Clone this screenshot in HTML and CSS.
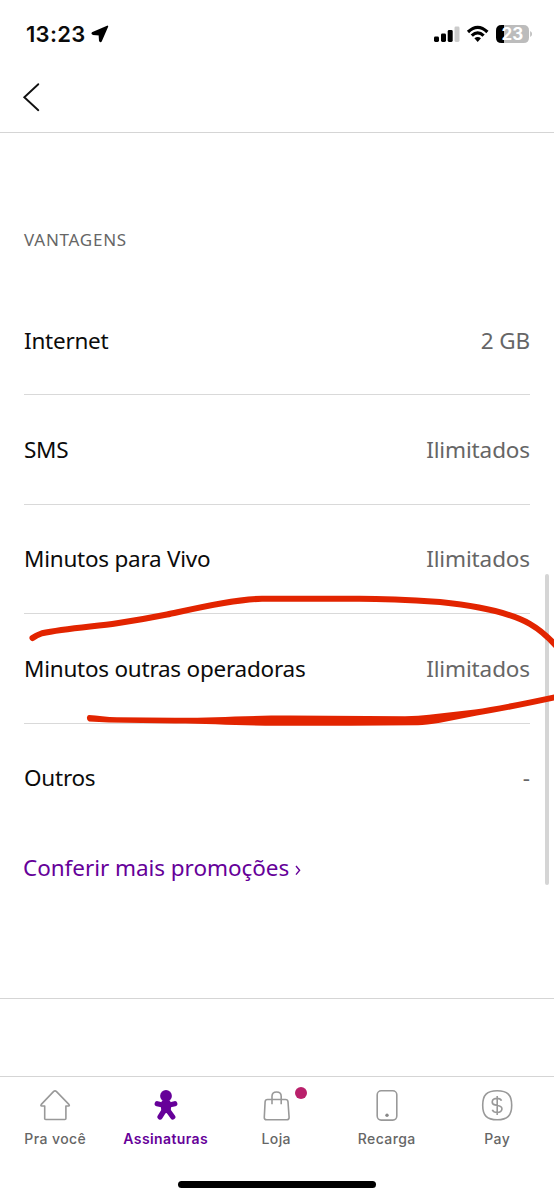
FILE: index.html
```html
<!DOCTYPE html>
<html lang="pt-BR">
<head>
<meta charset="utf-8">
<title>Vantagens</title>
<link rel="stylesheet" href="styles.css">
</head>
<body>
<div class="screen">
  <div class="status">
    <span class="time">13:23</span>
    <svg class="arrow" width="18" height="18" viewBox="0 0 18 18"><path d="M16.400 1.400 L10.200 15.800 Q9.300 17.300 8.800 15.600 L8.400 9.700 L2 9.100 Q.600 8.600 1.800 7.700 Z" stroke="#000" stroke-width="1.600" stroke-linejoin="round"/></svg>
    <svg class="indicators" width="100" height="22" viewBox="0 0 100 22">
      <rect x="2" y="13.500" width="5" height="5.500" rx="1.400"/>
      <rect x="9" y="10.500" width="5" height="8.500" rx="1.400"/>
      <rect x="15.700" y="7" width="5" height="12" rx="1.400"/>
      <rect x="22.500" y="3.500" width="5" height="15.500" rx="1.400" fill="#cbcbcb"/>
      <g fill="none" stroke="#000" stroke-width="3.200">
        <path d="M36 9 Q45.700 -.200 55.400 9"/>
        <path d="M39.800 12.700 Q45.700 7 51.600 12.700"/>
      </g>
      <path d="M42.400 15.300 Q45.700 12.600 49 15.300 L45.700 18.900Z"/>
      <path d="M69.500 2H74V20H69.500Q64 20 64 14.500V7.500Q64 2 69.500 2Z"/>
      <path d="M72 2H91.500Q97 2 97 7.500V14.500Q97 20 91.500 20H72Z" fill="#bcbcbc"/>
      <path d="M98.200 8Q100 9 100 11T98.200 14Z" fill="#bcbcbc"/>
      <text class="battery" x="80.400" y="17.300">23</text>
    </svg>
  </div>
  <header class="header">
    <svg width="18" height="30" viewBox="0 0 18 30"><path d="M16.300 2.200 L2.300 15.200 L16.300 28.200" fill="none" stroke="#111" stroke-width="1.900" stroke-linecap="round"/></svg>
  </header>
  <main class="content">
    <h1 class="title">VANTAGENS</h1>
    <div class="row"><span class="label">Internet</span><span class="value">2 GB</span></div>
    <div class="row"><span class="label">SMS</span><span class="value">Ilimitados</span></div>
    <div class="row"><span class="label">Minutos para Vivo</span><span class="value">Ilimitados</span></div>
    <div class="row"><span class="label">Minutos outras operadoras</span><span class="value">Ilimitados</span></div>
    <div class="row last"><span class="label">Outros</span><span class="value">-</span></div>
    <a class="link"><span>Conferir mais promoções</span><svg width="6" height="11" viewBox="0 0 6 11"><path d="M1 1 L4.600 5.300 L1 9.600" fill="none" stroke="#660099" stroke-width="1.400"/></svg></a>
  </main>
  <nav class="tabs">
    <div class="tab">
      <svg width="34" height="34" viewBox="0 0 34 34"><path d="M6.700 31V18H3.800Q2.200 17.700 3.300 16.400L15.700 3.400Q17 2.200 18.300 3.400L30.900 16.400Q32 17.700 30.400 18H27.900V30.500Q27.900 31.500 26.900 31.500H7.700Q6.700 31.500 6.700 30.500Z"/></svg>
      <span>Pra você</span>
    </div>
    <div class="tab active">
      <svg width="34" height="34" viewBox="0 0 34 34"><circle cx="17" cy="7.900" r="5.900"/><path class="limb" d="M8.200 15.700Q17 18.300 25.800 15.700M16 21L11 29M18 21L23.800 29"/><path d="M13 12.500H21L22.500 17 21.600 22.500 19.500 25.500Q17.300 24.500 14.800 25.500L12.400 22.500 11.500 17Z"/></svg>
      <span>Assinaturas</span>
    </div>
    <div class="tab">
      <svg width="34" height="34" viewBox="0 0 34 34"><path d="M8.500 11.500H26.500Q28.800 11.500 29 13.700L30.100 29.200Q30.200 31.800 27.700 31.800H7.700Q5.100 31.800 5.300 29.200L6.100 13.700Q6.300 11.500 8.500 11.500ZM13 16.300V8.200Q13.100 4 17.600 4T22.200 8.200V16.300"/></svg>
      <i class="badge"></i>
      <span>Loja</span>
    </div>
    <div class="tab">
      <svg width="34" height="34" viewBox="0 0 34 34"><rect x="7.200" y="2.800" width="19.600" height="29.300" rx="4"/><circle class="dot" cx="17" cy="27.300" r="1.700"/></svg>
      <span>Recarga</span>
    </div>
    <div class="tab">
      <svg width="34" height="34" viewBox="0 0 34 34"><path d="M17.200 2.800C27.500 2.800 31.700 7 31.700 17.300S27.500 31.800 17.200 31.800 2.700 27.600 2.700 17.300 6.900 2.800 17.200 2.800Z"/><path d="M21.500 12.700Q20.500 10.400 17.200 10.400C10.900 10.400 11.100 16 15 16.900L18.700 17.700C23.500 18.700 22.900 24.500 17.200 24.500Q13.400 24.500 12.300 21.700M17.200 7.900V27"/></svg>
      <span>Pay</span>
    </div>
  </nav>
  <div class="home"></div>
  <div class="scrollbar"></div>
  <svg class="marks" width="554" height="140" viewBox="0 590 554 140">
    <path d="M32.500 638Q36 635.500 42 633.300C65 628.500 95 626.500 117 623.300Q142 619.500 167 614.500C195 608.500 235 599 262 598.800H350C382 598.200 402 599.500 440 602C478 606 512 613.500 530 624Q544 632 558 648" fill="none" stroke="#e22400" stroke-width="6" stroke-linecap="round"/>
    <path d="M89 715C97 715.500 107 717.300 117 717.300L175 717.800C210 718 240 715.500 290 715.500L405 716.200Q419 716.200 429 714.800L475 709.500Q500 706 554 694.500V700.500Q515 709 477 715.500L440 722.800Q426 725 418 725.300L350 725.800H277C240 725.800 210 723.500 175 723.500L109 722.600 89 721.600Q86.500 720.500 87 717Q87.500 715 89 715Z" fill="#e22400"/>
  </svg>
</div>
</body>
</html>
```
FILE: styles.css
```css
body { margin: 0; background: #fff; }
.screen {
  position: relative;
  width: 554px;
  height: 1200px;
  overflow: hidden;
  display: flex;
  flex-direction: column;
  background: #fff;
  font-family: "Noto Sans", sans-serif;
  color: #0b0b0b;
}
.status {
  flex: none;
  height: 68px;
  box-sizing: border-box;
  padding: 0 22px 0 26px;
  display: flex;
  align-items: center;
  font-family: Inter, sans-serif;
}
.time { font-size: 22px; font-weight: 600; letter-spacing: .3px; width: 60px; white-space: nowrap; }
.arrow { margin-left: 5px; }
.indicators { margin-left: auto; }
.battery { font: 700 17px Inter, sans-serif; fill: #fff; text-anchor: middle; }
.header {
  flex: none;
  height: 65px;
  box-sizing: border-box;
  padding: 14px 22px 0;
  border-bottom: 1px solid #d5d5d5;
}
.header svg { display: block; }
.content {
  flex: none;
  height: 866px;
  box-sizing: border-box;
  padding: 94px 24px 0;
  border-bottom: 1px solid #d5d5d5;
}
.title {
  margin: 0;
  height: 59px;
  font-size: 17px;
  letter-spacing: .750px;
  line-height: 25px;
  font-weight: 400;
  color: #666;
}
.row {
  height: 109.400px;
  box-sizing: border-box;
  display: flex;
  justify-content: space-between;
  align-items: center;
  border-bottom: 1.500px solid #d9d9d9;
  font-size: 22.500px;
}
.row.last { border-color: transparent; }
.label { letter-spacing: -.240px; }
.value { color: #666; letter-spacing: -.120px; }
.link {
  height: 70px;
  margin-left: -1px;
  display: flex;
  align-items: center;
  gap: 6px;
  font-size: 22.500px;
  letter-spacing: -.050px;
  color: #660099;
}
.link svg { margin-top: 5px; }
.tabs {
  flex: none;
  margin-top: 77px;
  height: 100px;
  box-sizing: border-box;
  border-top: 1px solid #d5d5d5;
  padding-right: 1.500px;
  display: grid;
  grid-template-columns: repeat(5, 1fr);
  font: 500 14px/20px Inter, sans-serif;
  letter-spacing: .400px;
  color: #666;
}
.tab {
  position: relative;
  display: flex;
  flex-direction: column;
  align-items: center;
  padding-top: 11px;
}
.tab svg { fill: none; stroke: #999; stroke-width: 1.600; stroke-linejoin: round; margin-bottom: 7px; }
.tab svg .dot { fill: #888; stroke: none; }
.tab.active { color: #660099; font-weight: 600; }
.tab.active svg { fill: #660099; stroke: none; }
.tab.active .limb { fill: none; stroke: #660099; stroke-width: 5.200; stroke-linecap: round; }
.badge {
  position: absolute;
  left: 74px;
  top: 10px;
  width: 12px;
  height: 12px;
  border-radius: 50%;
  background: #b9206b;
}
.home {
  position: absolute;
  left: 178px;
  top: 1181px;
  width: 198px;
  height: 7px;
  border-radius: 4px;
  background: #000;
}
.scrollbar {
  position: absolute;
  left: 545px;
  top: 574px;
  width: 4px;
  height: 311px;
  border-radius: 2px;
  background: #d5d5d5;
}
.marks { position: absolute; left: 0; top: 590px; }
```
